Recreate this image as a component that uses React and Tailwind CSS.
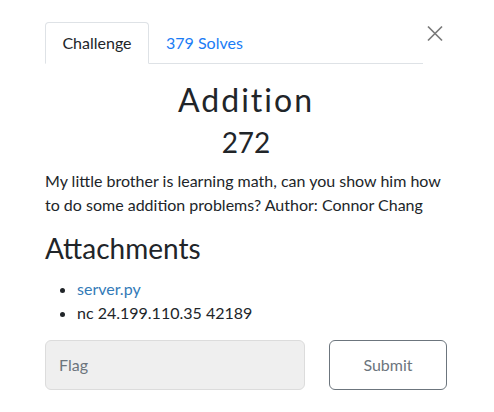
import React from "react";

export default function App() {
  return (
    <div
      className="w-[494px] h-[412px] bg-white pt-[22px] pl-[45px] pr-[47px] text-[#212529]"
      style={{ fontFamily: "Lato, 'Open Sans', sans-serif" }}
    >
      <div className="flex items-start">
        <ul className="flex w-[378px] border-b border-[#dee2e6] text-[16px] leading-[24px]">
          <li className="-mb-px">
            <span className="block w-[104px] text-center py-2 border border-[#dee2e6] border-b-white rounded-t-[4px] bg-white text-[#212529]">
              Challenge
            </span>
          </li>
          <li className="-mb-px">
            <span className="block px-4 py-2 border border-transparent text-[#1a7cf5]">
              379 Solves
            </span>
          </li>
        </ul>
        <button className="ml-[4px] mt-[3px] w-[16px] h-[17px] flex items-center justify-center">
          <svg width="16" height="17" viewBox="0 0 16 17">
            <path d="M1 1.5 L15 15.5 M15 1.5 L1 15.5" stroke="#7a7a7a" strokeWidth="1.7" fill="none" />
          </svg>
        </button>
      </div>

      <h2 className="mt-[17px] mb-[7px] text-center text-[32px] leading-[1.2] font-normal tracking-[2px]">
        Addition
      </h2>
      <h3 className="text-center text-[28px] leading-[1.2] font-normal">272</h3>

      <p className="mt-[9px] mb-[15px] text-[16px] leading-[24px]">
        My little brother is learning math, can you show him how to do some addition problems? Author: Connor Chang
      </p>

      <h4 className="text-[28px] leading-[1.2] font-normal">Attachments</h4>
      <ul className="mt-[11px] list-disc pl-[32px] text-[16px] leading-[24px]">
        <li>
          <span className="text-[#337ab7]">server.py</span>
        </li>
        <li>nc 24.199.110.35 42189</li>
      </ul>

      <div className="mt-[15px] flex gap-[24px]">
        <div className="w-[260px] h-[50px] rounded-[6px] border border-[#dcdcdc] bg-[#efefef] flex items-center px-[13px] text-[16px] text-[#6c757d]">
          Flag
        </div>
        <button className="w-[118px] h-[50px] rounded-[6px] border border-[#6c757d] bg-white text-[16px] text-[#6c757d]">
          Submit
        </button>
      </div>
    </div>
  );
}
